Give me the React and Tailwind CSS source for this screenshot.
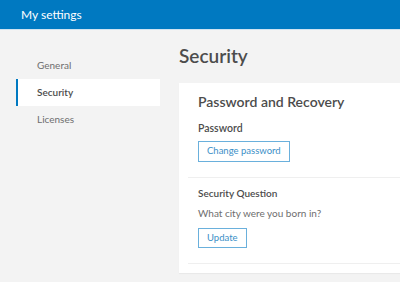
export default function App() {
  const navItems = ["General", "Security", "Licenses"];

  return (
    <div className="min-h-[282px] bg-[#f3f3f3] font-['Lato',sans-serif] overflow-hidden">
      <header className="h-[30px] bg-[#0079c1] border-b border-[#cfe3f1] flex items-center pl-[21px]">
        <h1 className="text-white text-[12px] leading-none">My settings</h1>
      </header>

      <div className="flex">
        {/* Side nav */}
        <nav className="w-[144px] ml-[16px] pt-[22px] shrink-0">
          {navItems.map((item) => (
            <div
              key={item}
              className={
                item === "Security"
                  ? "h-[27px] flex items-center pl-[19px] bg-white border-l-2 border-[#0079c1] text-[10px] font-semibold text-[#4c4c4c]"
                  : "h-[27px] flex items-center pl-[21px] text-[10px] text-[#6e6e6e]"
              }
            >
              {item}
            </div>
          ))}
        </nav>

        {/* Main */}
        <main className="flex-1 ml-[19px] min-w-0">
          <h2 className="mt-[12px] h-[29px] flex items-center text-[19px] font-semibold text-[#4c4c4c]">
            Security
          </h2>
          <div className="mt-[12px] bg-white pl-[9px] pb-[9px] shadow-[0_1px_1px_rgba(0,0,0,0.04)]">
            <section className="border-b border-[#efefef] pl-[10px] pt-[9px] pb-[15px]">
              <h3 className="h-[18px] flex items-center text-[14px] font-semibold text-[#4c4c4c]">
                Password and Recovery
              </h3>
              <p className="mt-[11px] h-[14px] leading-[14px] text-[10.5px] font-semibold text-[#4c4c4c]">Password</p>
              <button className="mt-[6px] h-[21px] px-[8px] border border-[#6ab0dc] text-[9.5px] text-[#3b8fc7] bg-white">
                Change password
              </button>
            </section>
            <section className="border-b border-[#efefef] pl-[10px] pt-[8px] pb-[15px]">
              <p className="h-[14px] leading-[14px] text-[10px] font-semibold text-[#4c4c4c]">Security Question</p>
              <p className="mt-[6px] h-[14px] leading-[14px] text-[10px] text-[#6e6e6e]">What city were you born in?</p>
              <button className="mt-[8px] h-[20px] px-[8px] border border-[#6ab0dc] text-[9.5px] text-[#3b8fc7] bg-white">
                Update
              </button>
            </section>
          </div>
        </main>
      </div>
    </div>
  );
}
